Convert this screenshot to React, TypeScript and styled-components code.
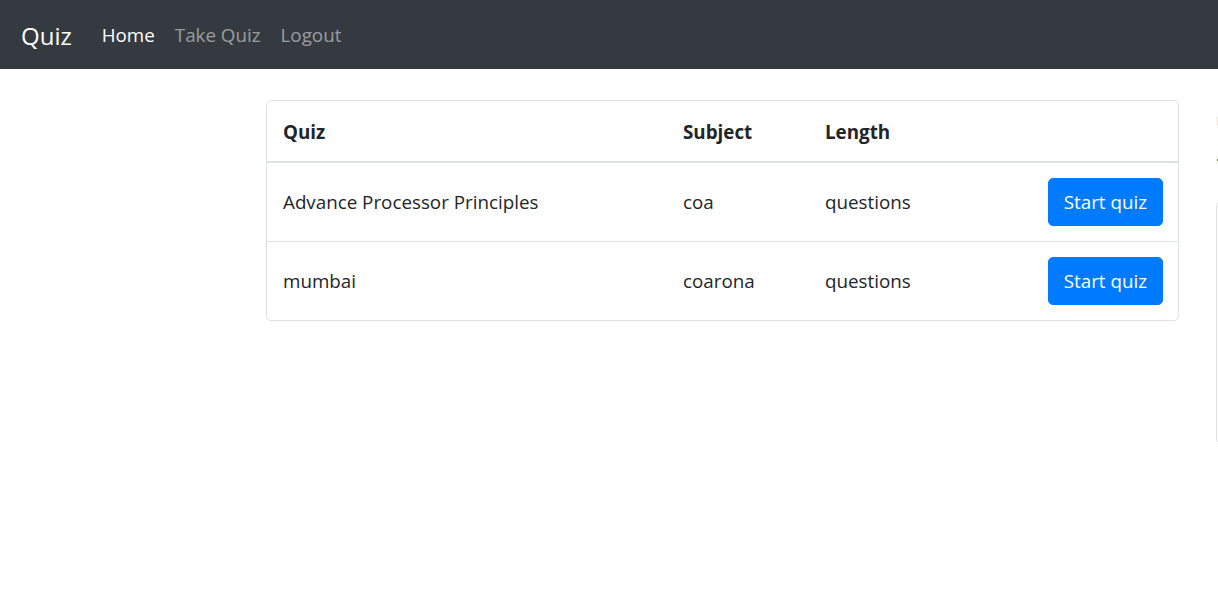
import React from "react";
import styled, { createGlobalStyle } from "styled-components";

const Global = createGlobalStyle`
  html, body { margin: 0; padding: 0; background: #fff; overflow: hidden; }
  body {
    font-family: "Open Sans", "Noto Sans", Arial, sans-serif;
    font-size: 18.8px;
    line-height: 1.5;
    color: #212529;
  }
  * { box-sizing: border-box; }
`;

const NavBar = styled.nav`
  height: 69px;
  background: #343a40;
  display: flex;
  align-items: center;
  padding: 2px 20px 0 21px;
`;

const Brand = styled.a`
  font-size: 24px;
  color: #fff;
  margin-right: 20px;
  text-decoration: none;
  line-height: 1.5;
`;

const NavList = styled.div`
  display: flex;
  align-items: center;
`;

const NavLink = styled.a<{ $active?: boolean }>`
  padding: 0 10px;
  color: ${(p) => (p.$active ? "#fff" : "rgba(255,255,255,0.5)")};
  text-decoration: none;
  font-size: 18.8px;
`;

const Main = styled.main`
  display: flex;
  align-items: flex-start;
  padding: 31px 0 0 266px;
  gap: 37px;
  width: max-content;
`;

const TableCard = styled.div`
  width: 913px;
  border: 1px solid #dee2e6;
  border-radius: 5px;
  flex-shrink: 0;
`;

const Table = styled.table`
  width: 100%;
  border-collapse: collapse;
`;

const HeadCell = styled.th<{ $w?: number }>`
  text-align: left;
  font-weight: 700;
  padding: 16px 15px 14px 16px;
  border-bottom: 2px solid #dee2e6;
  width: ${(p) => (p.$w ? `${p.$w}px` : "auto")};
  line-height: 30px;
`;

const Row = styled.tr<{ $first?: boolean }>`
  border-top: ${(p) => (p.$first ? "none" : "1px solid #dee2e6")};
`;

const Cell = styled.td<{ $right?: boolean }>`
  padding: 15px 15px 15px 16px;
  vertical-align: middle;
  text-align: ${(p) => (p.$right ? "right" : "left")};
  line-height: 30px;
`;

const StartButton = styled.button`
  font-family: inherit;
  font-size: 18.8px;
  line-height: 30px;
  color: #fff;
  background: #007bff;
  border: 1px solid #007bff;
  border-radius: 5px;
  padding: 8px 15px;
  height: 48px;
  cursor: pointer;
`;

const Side = styled.aside`
  width: 300px;
  flex-shrink: 0;
  display: flex;
  flex-direction: column;
  padding-top: 17px;
`;

const SideMark = styled.div<{ $color: string; $h: number; $mb: number }>`
  width: 2px;
  height: ${(p) => p.$h}px;
  background: ${(p) => p.$color};
  margin-bottom: ${(p) => p.$mb}px;
  margin-left: 1px;
`;

const SideCard = styled.div`
  height: 243px;
  border: 1px solid #dee2e6;
  border-radius: 5px;
`;

const quizzes = [
  { name: "Advance Processor Principles", subject: "coa", length: "questions" },
  { name: "mumbai", subject: "coarona", length: "questions" },
];

export default function App() {
  return (
    <>
      <Global />
      <NavBar>
        <Brand href="#">Quiz</Brand>
        <NavList>
          <NavLink href="#" $active>Home</NavLink>
          <NavLink href="#">Take Quiz</NavLink>
          <NavLink href="#">Logout</NavLink>
        </NavList>
      </NavBar>
      <Main>
        <TableCard>
          <Table>
            <thead>
              <tr>
                <HeadCell $w={400}>Quiz</HeadCell>
                <HeadCell $w={142}>Subject</HeadCell>
                <HeadCell>Length</HeadCell>
                <HeadCell />
              </tr>
            </thead>
            <tbody>
              {quizzes.map((q, i) => (
                <Row key={q.name} $first={i === 0}>
                  <Cell>{q.name}</Cell>
                  <Cell>{q.subject}</Cell>
                  <Cell>{q.length}</Cell>
                  <Cell $right>
                    <StartButton>Start quiz</StartButton>
                  </Cell>
                </Row>
              ))}
            </tbody>
          </Table>
        </TableCard>
        <Side>
          <SideMark $color="#f8e4b0" $h={8} $mb={34} />
          <SideMark $color="#8a6a30" $h={2} $mb={40} />
          <SideCard />
        </Side>
      </Main>
    </>
  );
}
